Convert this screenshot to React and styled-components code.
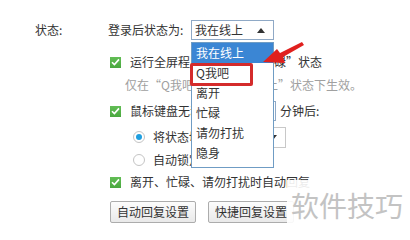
import React from 'react';
import styled, { createGlobalStyle } from 'styled-components';

const Global = createGlobalStyle`
  html, body { margin: 0; padding: 0; background: #fff; }
  body {
    font-family: "Noto Sans CJK SC", "Liberation Sans", sans-serif;
    font-size: 12px;
    color: #333;
  }
`;

const Page = styled.div`
  position: relative;
  width: 410px;
  height: 240px;
  overflow: hidden;
  background: #fff;
  padding: 20px 0 0 35px;
  box-sizing: border-box;
`;

const TopRow = styled.div`
  display: flex;
  align-items: center;
  height: 20px;
`;

const Label = styled.span`
  flex: none;
  width: ${(p) => p.$w}px;
  white-space: nowrap;
  line-height: 1;
`;

const Select = styled.div`
  box-sizing: border-box;
  flex: none;
  width: ${(p) => p.$w}px;
  height: ${(p) => p.$h}px;
  margin-left: ${(p) => p.$ml || 0}px;
  border: 1px solid ${(p) => p.$border || '#8fa9c6'};
  background: #fff;
  display: flex;
  align-items: center;
  justify-content: space-between;
  padding: 0 8px 0 3px;
  line-height: 1;
`;

const Caret = styled.span`
  width: 0;
  height: 0;
  border-left: 4px solid transparent;
  border-right: 4px solid transparent;
  ${(p) => (p.$up ? 'border-bottom: 5px solid #333;' : 'border-top: 5px solid #333;')}
`;

const Section = styled.div`
  padding-left: 75px;
  display: flex;
  flex-direction: column;
`;

const Row = styled.div`
  display: flex;
  align-items: center;
  height: ${(p) => p.$h}px;
  margin-top: ${(p) => p.$mt || 0}px;
  padding-left: ${(p) => p.$pl || 0}px;
  white-space: nowrap;
  line-height: 1;
  color: ${(p) => (p.$muted ? '#a0a0a0' : '#333')};
`;

const Gap = styled.span`
  margin-left: ${(p) => p.$w}px;
`;

const Check = styled.span`
  flex: none;
  width: 11px;
  height: 11px;
  background: linear-gradient(#62bd55, #4aa83f);
  display: flex;
  align-items: center;
  justify-content: center;
  margin-right: 9px;
`;

const Radio = styled.span`
  flex: none;
  box-sizing: border-box;
  width: 12px;
  height: 12px;
  border-radius: 50%;
  border: 1px solid #c4c4c4;
  background: #fff;
  display: flex;
  align-items: center;
  justify-content: center;
  margin-right: 8px;
  &::after {
    content: '';
    width: 6px;
    height: 6px;
    border-radius: 50%;
    background: ${(p) => (p.$on ? '#1f9fe0' : 'transparent')};
  }
`;

const Buttons = styled.div`
  display: flex;
  gap: 12px;
  margin-top: 8px;
`;

const Button = styled.button`
  box-sizing: border-box;
  height: 22px;
  padding: 0 6px;
  border: 1px solid #acacac;
  border-radius: 2px;
  background: linear-gradient(#fcfcfc, #e9e9e9);
  font-family: inherit;
  font-size: 12px;
  color: #333;
  line-height: 1;
`;

const Dropdown = styled.div`
  position: absolute;
  left: 191px;
  top: 42px;
  width: 83px;
  box-sizing: border-box;
  border: 1px solid #6f9cc4;
  background: #fff;
  padding-bottom: 4px;
  display: flex;
  flex-direction: column;
`;

const Item = styled.div`
  position: relative;
  height: 20px;
  display: flex;
  align-items: center;
  padding-left: 4px;
  line-height: 1;
  background: ${(p) => (p.$active ? '#3b86d4' : '#fff')};
  color: ${(p) => (p.$active ? '#fff' : '#333')};
`;

const Marked = styled.span`
  position: absolute;
  z-index: 2;
  left: -2px;
  top: 0px;
  width: 63px;
  height: 23px;
  box-sizing: border-box;
  border: 3px solid #d42b2b;
  border-radius: 2px;
`;

const ArrowSvg = styled.svg`
  position: absolute;
  z-index: 3;
  left: 255px;
  top: 36px;
`;

const Watermark = styled.div`
  position: absolute;
  left: 287px;
  top: 180px;
  right: 0;
  bottom: 0;
  background: rgba(255, 255, 255, 0.9);
  display: flex;
  align-items: flex-start;
  padding: 11px 0 0 4px;
  font-size: 28px;
  line-height: 1;
  color: #c3c3c3;
  white-space: nowrap;
`;

const Tick = () => (
  <svg width="9" height="8" viewBox="0 0 9 8">
    <path d="M1 4.2 L3.4 6.6 L8 1.4" fill="none" stroke="#fff" strokeWidth="1.6" />
  </svg>
);

const items = ['我在线上', 'Q我吧', '离开', '忙碌', '请勿打扰', '隐身'];

export default function App() {
  return (
    <>
      <Global />
      <Page>
        <TopRow>
          <Label $w={73}>状态:</Label>
          <Label $w={83}>登录后状态为:</Label>
          <Select $w={83} $h={20}>
            <span>我在线上</span>
            <Caret $up />
          </Select>
        </TopRow>
        <Section>
          <Row $h={24} $mt={10}>
            <Check><Tick /></Check>
            <span>运行全屏程序时切换为“忙碌”状态</span>
          </Row>
          <Row $h={22} $pl={15} $muted>
            <span>仅在“Q我吧”和“我在线上”状态下生效。</span>
          </Row>
          <Row $h={24} $mt={3}>
            <Check><Tick /></Check>
            <span>鼠标键盘无动作超过</span>
            <Select $w={34} $h={20} $ml={4}>
              <span>5</span>
            </Select>
            <Gap $w={4}>分钟后:</Gap>
          </Row>
          <Row $h={24} $mt={2} $pl={23}>
            <Radio $on />
            <span>将状态切换为:</span>
            <Select $w={52} $h={21} $ml={6} $border="#c8c8c8">
              <span>离开</span>
              <Caret />
            </Select>
          </Row>
          <Row $h={22} $pl={23}>
            <Radio />
            <span>自动锁定QQ</span>
          </Row>
          <Row $h={22}>
            <Check><Tick /></Check>
            <span>离开、忙碌、请勿打扰时自动回复</span>
          </Row>
          <Buttons>
            <Button>自动回复设置</Button>
            <Button>快捷回复设置</Button>
          </Buttons>
        </Section>

        <Dropdown>
          {items.map((t, i) => (
            <Item key={t} $active={i === 0}>
              {i === 1 && <Marked />}
              {t}
            </Item>
          ))}
        </Dropdown>

        <ArrowSvg width="56" height="34" viewBox="0 0 56 34">
          <polygon
            points="8,26 22,13 25,17 47,6 49,9 28,21 30,27"
            fill="#e0201e"
          />
        </ArrowSvg>

        <Watermark>软件技巧</Watermark>
      </Page>
    </>
  );
}
